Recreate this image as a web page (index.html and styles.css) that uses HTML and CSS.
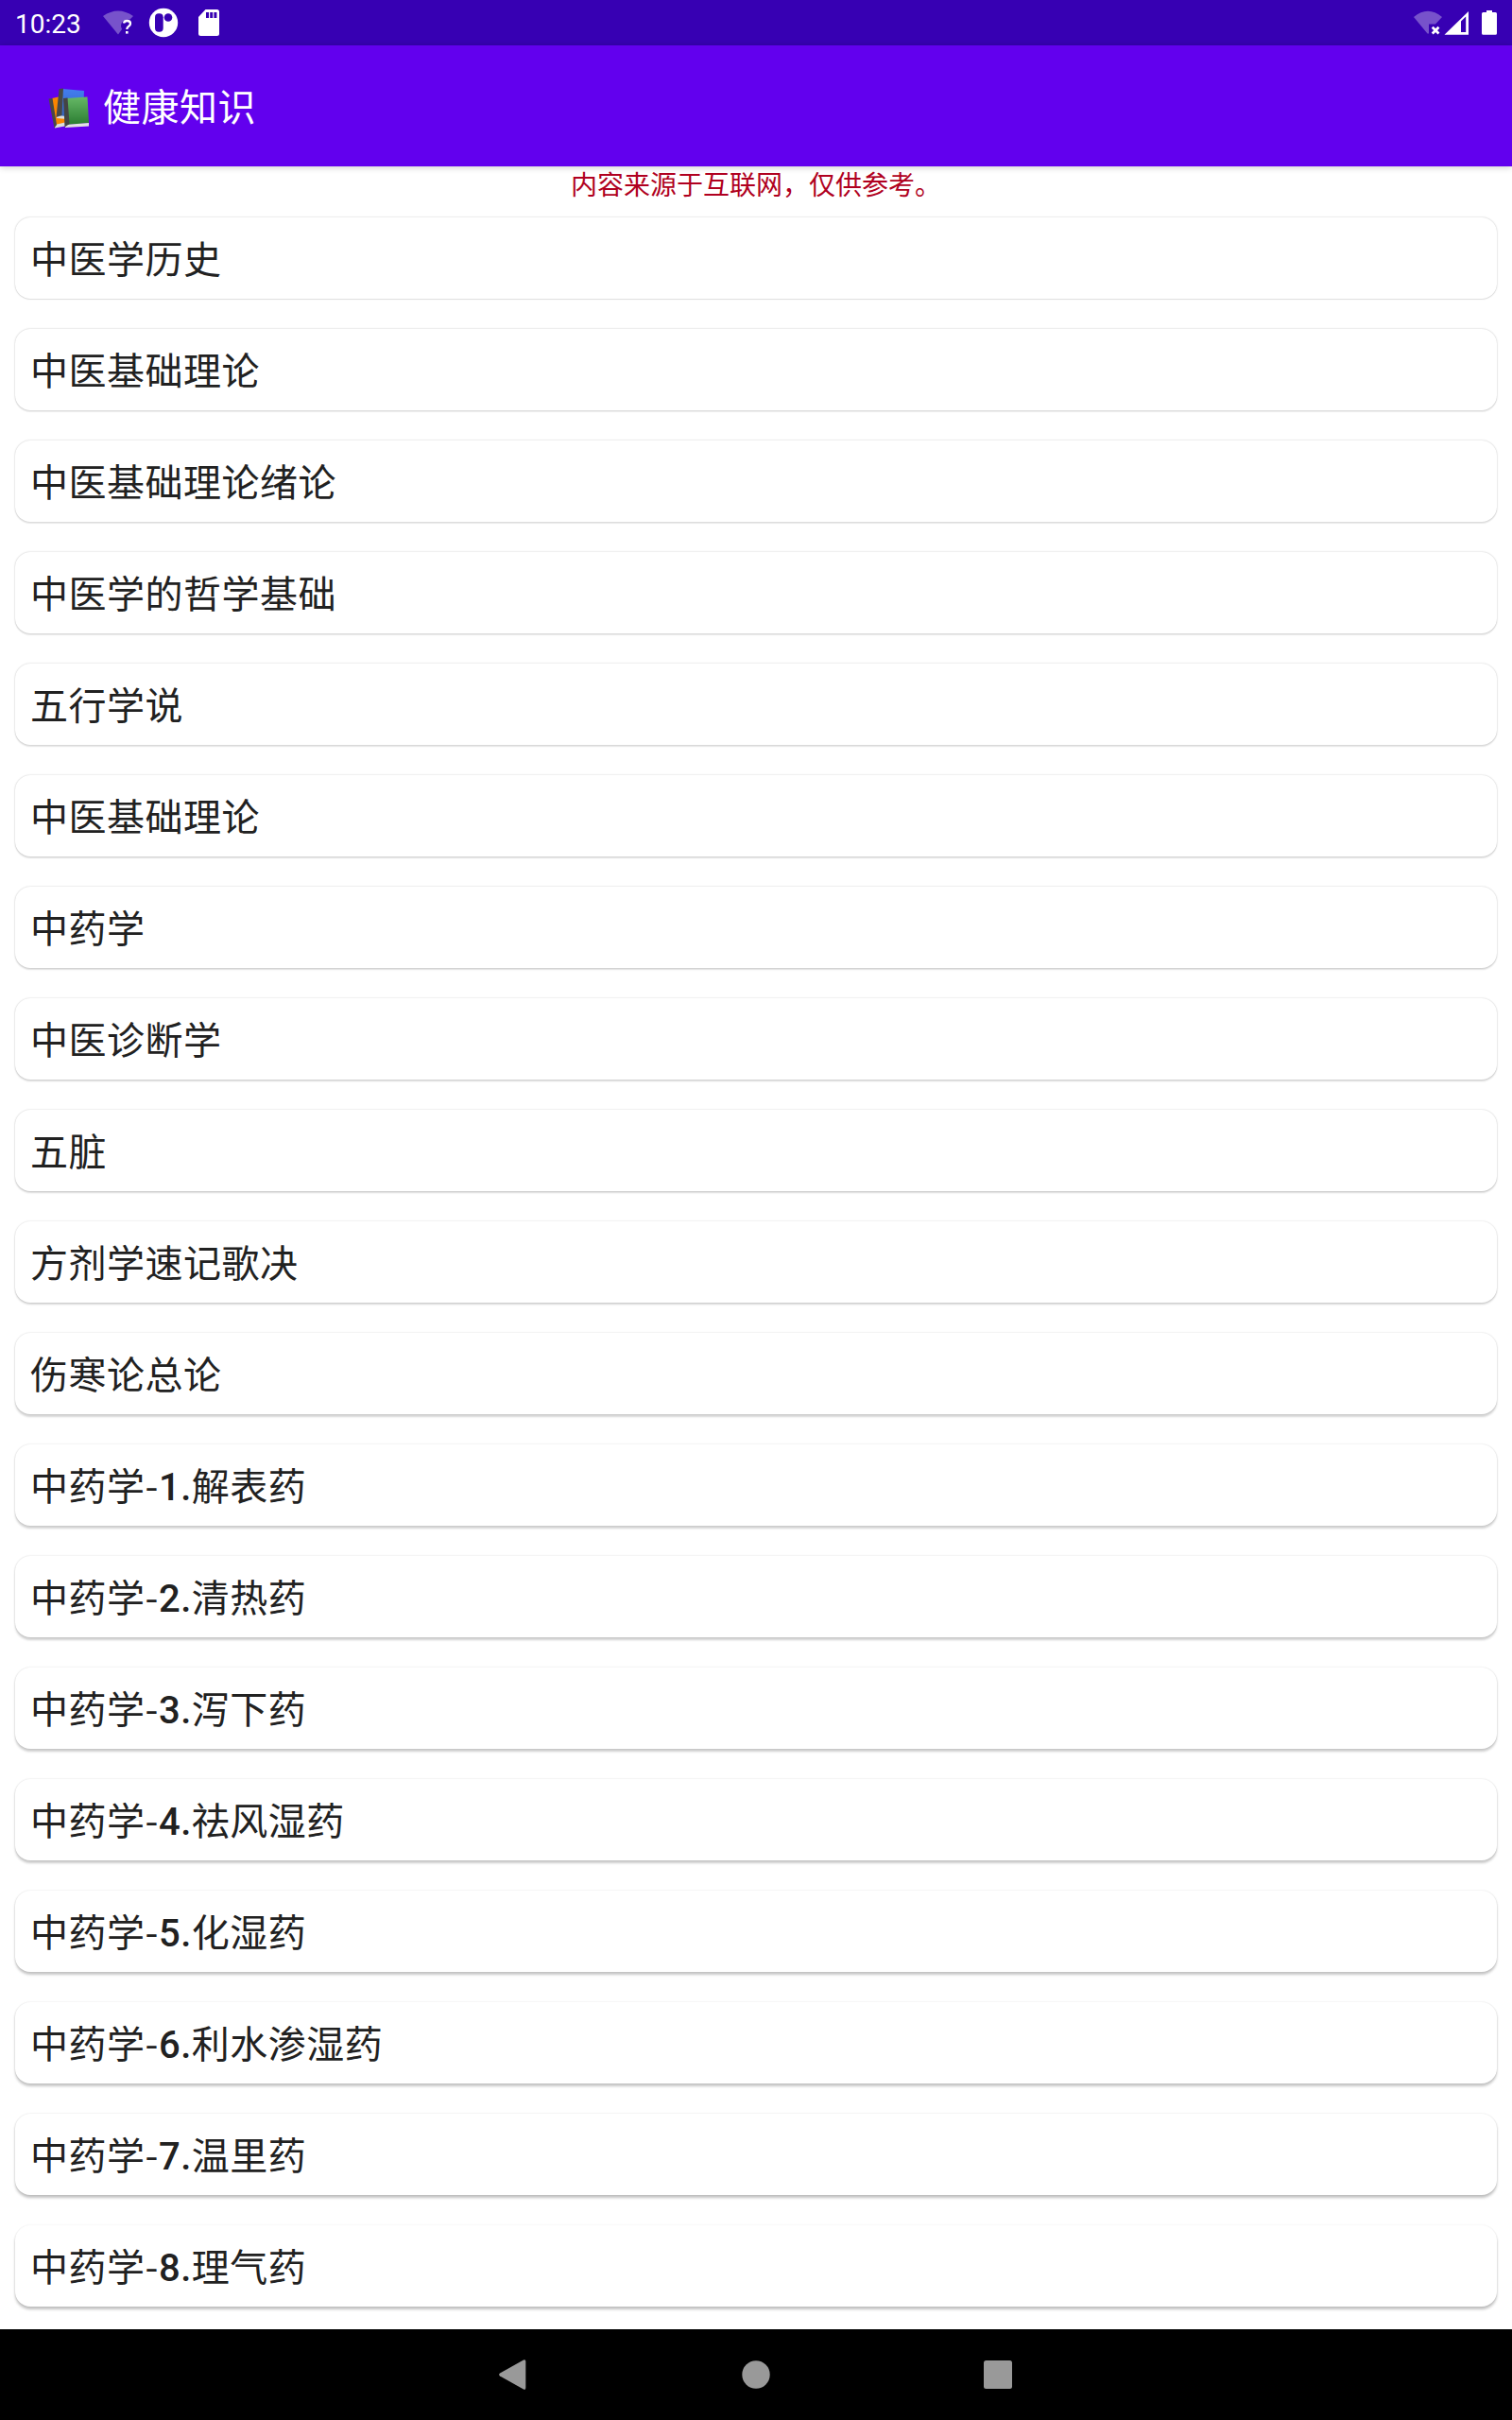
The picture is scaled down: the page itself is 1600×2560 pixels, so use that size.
FILE: index.html
```
<!DOCTYPE html>
<html lang="zh-CN">
  <head>
    <meta charset="UTF-8" />
    <meta name="viewport" content="width=device-width, initial-scale=1.0" />
    <title>健康知识</title>
    <link rel="stylesheet" href="styles.css">
  </head>
  <body>
    <div class="status-bar">
      <span class="clock">10:23</span>
      <svg class="status-left" width="130" height="48" viewBox="106 0 130 48">
        <path d="M109 17Q125 6 141 17L137.500 20.500Q128 20 128 28L129 31L125 36.500Z" fill="#fff" fill-opacity=".32" />
        <path d="M131 24.500Q131.500 22 134.500 22Q138 22 138 25Q138 26.800 136 28Q134.300 29 134.300 31" fill="none" stroke="#fff" stroke-width="2.300" />
        <rect x="133" y="33" width="2.600" height="2.600" fill="#fff" />
        <circle cx="173" cy="24" r="15.200" fill="#fff" />
        <rect x="164" y="14.300" width="8.700" height="19.400" rx="4" fill="#3700b3" />
        <circle cx="178" cy="18.500" r="4.300" fill="#3700b3" />
        <path d="M217.500 10H229.500Q232 10 232 12.500V35.500Q232 38 229.500 38H212.500Q210 38 210 35.500V18Z" fill="#fff" />
        <path d="M218 13h3v6h-3zM222.200 13h3v6h-3zM226.400 13h3v6h-3z" fill="#3700b3" />
      </svg>
      <svg class="status-right" width="90" height="48" viewBox="1496 0 90 48">
        <path d="M1496 18Q1511 5.500 1526 18L1519 25.500H1512V35.500H1510.500Z" fill="#fff" fill-opacity=".32" />
        <path d="M1515.700 28.700L1522.500 35.500M1522.500 28.700L1515.700 35.500" stroke="#fff" stroke-width="2.700" />
        <path fill-rule="evenodd" d="M1528.500 36.800L1554 12V36.800ZM1546 22.500V34H1551.200V17.500Z" fill="#fff" />
        <path d="M1573 11H1579V13H1582.500Q1584 13 1584 14.500V35.300Q1584 36.800 1582.500 36.800H1569.500Q1568 36.800 1568 35.300V14.500Q1568 13 1569.500 13H1573Z" fill="#fff" />
      </svg>
    </div>

    <header class="app-bar">
      <svg class="books" width="46" height="46" viewBox="0 0 46 46">
        <defs>
          <linearGradient id="green" x2="0" y2="1">
            <stop offset="0" stop-color="#66b866" />
            <stop offset="1" stop-color="#2b7d32" />
          </linearGradient>
          <linearGradient id="blue" x2="0" y2="1">
            <stop offset="0" stop-color="#437df0" />
            <stop offset="1" stop-color="#3264c2" />
          </linearGradient>
        </defs>
        <path d="M5 12L19 9L25 38L8 41Z" fill="#fb8500" />
        <path d="M8 40L21 37V41L8 43.500Z" fill="#ddd" />
        <path d="M1.500 12.500L5.500 12L10 40L7.500 43.500Z" fill="#484848" />
        <path d="M16 2L39 4L38 34L14 32Z" fill="url(#blue)" />
        <path d="M10 30L21 31V34L10 33Z" fill="#ddd" />
        <path d="M12.500 2L17 1.500L15.500 30L9.500 32Z" fill="#484848" />
        <path d="M21 12L42.500 10.500L44 38L22 40Z" fill="url(#green)" />
        <path d="M19 40L44 38V41.500L19 43Z" fill="#e2e2e2" />
        <path d="M17 12L21.500 11.500L23.500 39L18.500 42.500Z" fill="#444" />
      </svg>
      <h1>健康知识</h1>
    </header>

    <main>
      <p class="notice">内容来源于互联网，仅供参考。</p>
      <ul class="topics" id="topics"></ul>
    </main>

    <nav class="nav-bar">
      <svg width="32" height="32" viewBox="0 0 32 32">
        <path d="M1 14.500L26 .400Q28.300 -.500 28.300 2V30Q28.300 32.500 26 31.600L1 17.500Q-.800 16 1 14.500Z" />
      </svg>
      <svg width="32" height="32" viewBox="0 0 32 32"><circle cx="16" cy="16" r="14.700" /></svg>
      <svg width="32" height="32" viewBox="0 0 32 32"><rect x="1" y="1" width="30" height="30" rx="2.500" /></svg>
    </nav>

    <template id="topic-template">
      <li class="topic"></li>
    </template>

    <script>
      const topics = [
        "中医学历史",
        "中医基础理论",
        "中医基础理论绪论",
        "中医学的哲学基础",
        "五行学说",
        "中医基础理论",
        "中药学",
        "中医诊断学",
        "五脏",
        "方剂学速记歌决",
        "伤寒论总论",
        "中药学-1.解表药",
        "中药学-2.清热药",
        "中药学-3.泻下药",
        "中药学-4.祛风湿药",
        "中药学-5.化湿药",
        "中药学-6.利水渗湿药",
        "中药学-7.温里药",
        "中药学-8.理气药",
      ];
      const list = document.getElementById("topics");
      const template = document.getElementById("topic-template");

      topics.forEach(function (name, i) {
        const item = template.content.cloneNode(true).querySelector("li");
        // only the number is set in medium
        item.innerHTML = name.replace(
          /-(\d\.)/,
          '<span class="dash">-</span><span class="number">$1</span>'
        );
        // the shadow gets deeper towards the bottom of the screen
        item.style.setProperty("--depth", i / (topics.length - 1));
        list.appendChild(item);
      });
    </script>
  </body>
</html>
```

FILE: styles.css
```
* {
  box-sizing: border-box;
}
body {
  display: flex;
  flex-direction: column;
  height: 2560px;
  margin: 0;
  background: #fff;
  font-family: Roboto, "Noto Sans CJK SC", sans-serif;
}
.status-bar {
  display: flex;
  align-items: center;
  height: 48px;
  padding: 0 14px 0 16px;
  background: #3700b3;
  color: #fff;
}
.clock {
  width: 90px;
  font-size: 28px;
  line-height: 48px;
  padding-top: 3px;
}
.status-right {
  margin-left: auto;
}
.app-bar {
  display: flex;
  align-items: center;
  gap: 13px;
  height: 128px;
  padding: 0 50px;
  background: #6200ee;
  color: #fff;
  box-shadow: 0 1px 7px rgba(0, 0, 0, 0.2);
}
.app-bar .books {
  margin-top: 5px;
}
.app-bar h1 {
  margin: 0;
  padding-top: 5px;
  font-size: 40px;
  font-weight: 400;
  line-height: 56px;
  letter-spacing: 0.5px;
}
main {
  flex: 1;
}
.notice {
  margin: 0;
  height: 54px;
  line-height: 41px;
  font-size: 28px;
  text-align: center;
  color: #b00020;
}
.topics {
  display: flex;
  flex-direction: column;
  gap: 32px;
  margin: 0;
  padding: 0 16px;
  list-style: none;
}
.topic {
  height: 86px;
  padding: 2px 16px 0;
  border-radius: 16px;
  background: #fff;
  color: #212121;
  font-size: 40px;
  line-height: 88px;
  letter-spacing: 0.5px;
  box-shadow:
    0 0 2px rgba(0, 0, 0, calc(0.26 - 0.16 * var(--depth))),
    0 calc(1px + 2px * var(--depth)) calc(1px + 2px * var(--depth)) rgba(0, 0, 0, calc(0.06 + 0.18 * var(--depth)));
}
.dash {
  font-family: "Noto Sans CJK SC", sans-serif;
  line-height: 0;
}
.number {
  font-weight: 500;
}
.nav-bar {
  display: flex;
  justify-content: center;
  align-items: center;
  gap: 224px;
  height: 96px;
  background: #000;
}
.nav-bar svg {
  fill: #999;
}
```
